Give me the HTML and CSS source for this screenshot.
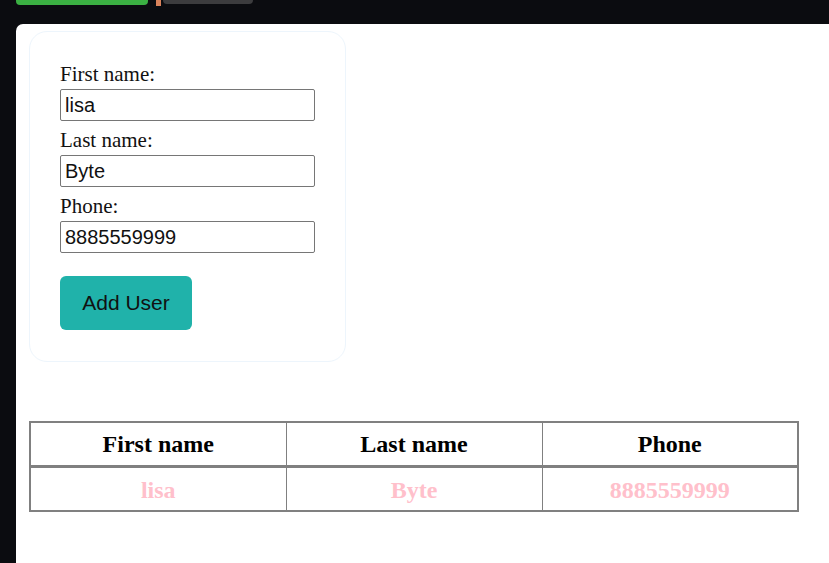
FILE: index.html
```html
<!DOCTYPE html>
<html>
<head>
<meta charset="utf-8">
<link rel="stylesheet" href="styles.css">
</head>
<body>
<div class="topbar">
  <div class="tab-green"></div>
  <div class="tab-orange"></div>
  <div class="tab-grey"></div>
</div>
<main class="panel">
  <form class="card">
    <label class="field-label">First name:</label>
    <input class="field-input" type="text" value="lisa">
    <label class="field-label">Last name:</label>
    <input class="field-input" type="text" value="Byte">
    <label class="field-label">Phone:</label>
    <input class="field-input" type="text" value="8885559999">
    <button class="add-btn" type="button">Add User</button>
  </form>
  <table class="users">
    <thead>
      <tr><th>First name</th><th>Last name</th><th>Phone</th></tr>
    </thead>
    <tbody>
      <tr><td>lisa</td><td>Byte</td><td>8885559999</td></tr>
    </tbody>
  </table>
</main>
</body>
</html>
```

FILE: styles.css
```css
html, body {
  margin: 0;
  padding: 0;
  background: #0b0c10;
  height: 100%;
  overflow: hidden;
}
body {
  font-family: "Liberation Serif", "Times New Roman", serif;
}
.topbar {
  display: flex;
  align-items: flex-start;
  padding-left: 16px;
  height: 24px;
}
.tab-green {
  width: 132px;
  height: 5px;
  background: #3bb143;
  border-radius: 0 0 4px 4px;
}
.tab-orange {
  width: 5px;
  height: 6px;
  background: #d9825b;
  margin-left: 8px;
}
.tab-grey {
  width: 90px;
  height: 4px;
  background: #3c3c3e;
  border-radius: 0 0 4px 4px;
  margin-left: 2px;
}
.panel {
  margin-left: 16px;
  background: #ffffff;
  border-top-left-radius: 7px;
  padding: 7px 0 0 13px;
  height: 539px;
  box-sizing: border-box;
}
.card {
  width: 255px;
  border: 1px solid #edf5fc;
  border-radius: 18px;
  padding: 30px 30px 31px 30px;
  display: flex;
  flex-direction: column;
  align-items: flex-start;
}
.field-label {
  font-size: 21px;
  line-height: 24px;
  color: #111;
  margin-top: 7px;
}
.field-label:first-child {
  margin-top: 0;
}
.field-label.last {
  margin-top: 8px;
}
.field-input {
  box-sizing: border-box;
  width: 255px;
  height: 32px;
  margin: 3px 0 0 0;
  border: 1px solid #767676;
  border-radius: 2px;
  padding: 0 4px;
  font-family: "Liberation Sans", Arial, sans-serif;
  font-size: 20px;
  color: #111;
  background: #fff;
}
.add-btn {
  margin-top: 23px;
  width: 132px;
  height: 54px;
  background: #20b2aa;
  border: none;
  border-radius: 6px;
  font-family: "Liberation Sans", Arial, sans-serif;
  font-size: 21px;
  color: #111;
  padding: 0;
}
.users {
  margin-top: 59px;
  width: 770px;
  border-collapse: collapse;
  border: 2px solid #808080;
  table-layout: fixed;
}
.users th, .users td {
  border: 1px solid #808080;
  font-size: 24px;
  font-weight: bold;
  text-align: center;
  padding: 8px 4px;
  line-height: 26px;
}
.users th {
  color: #000;
  border-bottom: 3px solid #808080;
}
.users td {
  color: #ffc0cb;
  padding-top: 9px;
  padding-bottom: 7px;
}
```
